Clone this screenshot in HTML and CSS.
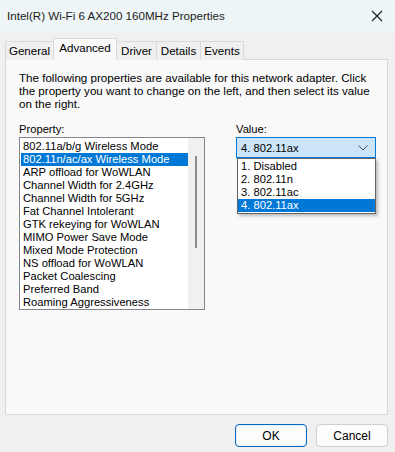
FILE: index.html
```html
<!DOCTYPE html>
<html lang="en">
<head>
    <meta charset="UTF-8">
    <title>Intel(R) Wi-Fi 6 AX200 160MHz Properties</title>
    <link rel="stylesheet" href="styles.css">
</head>
<body>
    <div class="window">
        <div class="titlebar">
            <span class="title">Intel(R) Wi-Fi 6 AX200 160MHz Properties</span>
            <span class="close">
                <svg width="12" height="12" viewBox="0 0 12 12"><path d="M1 1 L11 11 M11 1 L1 11" stroke="#1a1a1a" stroke-width="1.1" fill="none"/></svg>
            </span>
        </div>

        <div class="tabs">
            <div class="tab tab-general">General</div>
            <div class="tab tab-advanced active">Advanced</div>
            <div class="tab tab-driver">Driver</div>
            <div class="tab tab-details">Details</div>
            <div class="tab tab-events">Events</div>
        </div>

        <div class="panel">
            <p class="desc">The following properties are available for this network adapter. Click<br>the property you want to change on the left, and then select its value<br>on the right.</p>

            <div class="columns">
                <div class="prop-col">
                    <div class="label">Property:</div>
                    <div class="listbox">
                        <ul class="items">
                            <li>802.11a/b/g Wireless Mode</li>
                            <li class="selected">802.11n/ac/ax Wireless Mode</li>
                            <li>ARP offload for WoWLAN</li>
                            <li>Channel Width for 2.4GHz</li>
                            <li>Channel Width for 5GHz</li>
                            <li>Fat Channel Intolerant</li>
                            <li>GTK rekeying for WoWLAN</li>
                            <li>MIMO Power Save Mode</li>
                            <li>Mixed Mode Protection</li>
                            <li>NS offload for WoWLAN</li>
                            <li>Packet Coalescing</li>
                            <li>Preferred Band</li>
                            <li>Roaming Aggressiveness</li>
                        </ul>
                        <div class="scrollbar"><div class="thumb"></div></div>
                    </div>
                </div>

                <div class="value-col">
                    <div class="label">Value:</div>
                    <div class="combo">
                        <span>4. 802.11ax</span>
                        <svg width="10" height="6" viewBox="0 0 10 6"><path d="M0.5 0.5 L5 5 L9.5 0.5" stroke="#555" stroke-width="1" fill="none"/></svg>
                        <ul class="dropdown">
                            <li>1. Disabled</li>
                            <li>2. 802.11n</li>
                            <li>3. 802.11ac</li>
                            <li class="selected">4. 802.11ax</li>
                        </ul>
                    </div>
                </div>
            </div>
        </div>

        <div class="buttons">
            <button class="btn default">OK</button>
            <button class="btn">Cancel</button>
        </div>
    </div>
</body>
</html>
```

FILE: styles.css
```css
body {
    margin: 0;
    font-family: "Liberation Sans", Arial, sans-serif;
    font-size: 11.2px;
    color: #000;
    background: #f0f0f0;
}
.window {
    width: 395px;
    height: 452px;
    background: #f0f0f0;
    display: flex;
    flex-direction: column;
}
.titlebar {
    height: 31px;
    background: #eef5f6;
    display: flex;
    align-items: center;
    justify-content: space-between;
    padding: 0 12px 0 7px;
    font-size: 11.6px;
    color: #1a1a1a;
}
.close {
    display: flex;
}
.tabs {
    display: flex;
    height: 21px;
    margin: 7px 0 0 5px;
    align-items: flex-end;
    position: relative;
    z-index: 1;
}
.tab {
    height: 18px;
    line-height: 18px;
    text-align: center;
    box-sizing: content-box;
    border: 1px solid #d9d9d9;
    border-bottom: none;
    border-right: none;
    background: #f0f0f0;
    font-size: 11.6px;
    margin-bottom: -1px;
}
.tab-general { width: 47px; }
.tab-advanced { width: 62px; }
.tab-driver { width: 39px; }
.tab-details { width: 43px; }
.tab-events { width: 42px; border-right: 1px solid #d9d9d9; }
.tab.active {
    height: 21px;
    line-height: 18px;
    background: #f9f9f9;
    border-right: 1px solid #d9d9d9;
    position: relative;
    z-index: 2;
}
.tab.active + .tab {
    border-left: none;
}
.panel {
    height: 356px;
    margin: 0 7px 0 5px;
    border: 1px solid #d9d9d9;
    background: #f9f9f9;
    padding: 11px 0 0 13px;
    box-sizing: border-box;
}
.desc {
    margin: 0;
    line-height: 13px;
    font-size: 11.6px;
    white-space: nowrap;
}
.columns {
    display: flex;
    gap: 31px;
    margin-top: 13px;
}
.label {
    line-height: 13px;
    margin-bottom: 1px;
}
.listbox {
    width: 186px;
    height: 173px;
    box-sizing: border-box;
    border: 1px solid #828790;
    background: #fff;
    display: flex;
    padding: 1px;
}
.items {
    list-style: none;
    margin: 1px 0 0;
    padding: 0;
    flex: 1;
}
.items li {
    height: 13px;
    line-height: 13px;
    padding-left: 2px;
    white-space: nowrap;
    overflow: hidden;
}
.items li.selected,
.dropdown li.selected {
    background: #0078d7;
    color: #fff;
}
.scrollbar {
    width: 16px;
    background: #f0f0f0;
    position: relative;
    margin: -1px -1px -1px 0;
}
.thumb {
    position: absolute;
    left: 7px;
    top: 18px;
    width: 2px;
    height: 92px;
    background: #8a8a8a;
}
.value-col {
    width: 140px;
}
.combo {
    position: relative;
    height: 21px;
    box-sizing: border-box;
    border: 1px solid #0078d7;
    background: #cce4f7;
    display: flex;
    align-items: center;
    justify-content: space-between;
    padding: 0 7px 0 4px;
    margin-top: 1px;
}
.dropdown {
    position: absolute;
    top: 20px;
    left: 0;
    right: -1px;
    list-style: none;
    margin: 0;
    padding: 1px 0;
    background: #fff;
    border: 1px solid #646464;
    box-shadow: 2px 2px 3px rgba(0, 0, 0, 0.25);
}
.dropdown li {
    height: 13px;
    line-height: 13px;
    padding-left: 3px;
}
.buttons {
    display: flex;
    justify-content: flex-end;
    gap: 9px;
    padding: 9px 7px 0 0;
}
.btn {
    width: 72px;
    height: 23px;
    font-family: "Liberation Sans", Arial, sans-serif;
    font-size: 12px;
    background: #fdfdfd;
    border: 1px solid #d0d0d0;
    border-radius: 4px;
    color: #000;
    padding: 0;
}
.btn.default {
    border: 1px solid #0067c0;
    box-shadow: inset 0 0 0 1px #e8f0f8;
}
```
